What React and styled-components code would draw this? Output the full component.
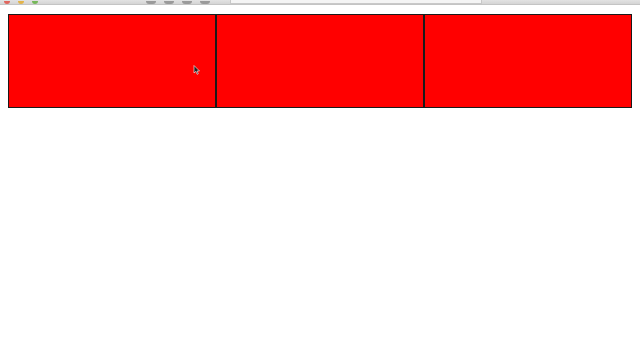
import React from 'react';
import styled, { createGlobalStyle } from 'styled-components';

const GlobalStyle = createGlobalStyle`
    html, body {
        margin: 0;
        padding: 0;
        background: #ffffff;
        font-family: "Liberation Sans", Arial, sans-serif;
    }
`;

const ChromeBar = styled.div`
    height: 4px;
    background: linear-gradient(#e2e2e2, #d4d4d4);
    border-bottom: 1px solid #c4c4c4;
    display: flex;
    align-items: flex-end;
    gap: 8px;
    padding: 0 4px;
`;

const ChromeDot = styled.span`
    width: 6px;
    height: 3px;
    border-radius: 0 0 3px 3px;
    background: ${props => props.color};
`;

const ChromeButton = styled.span`
    width: 10px;
    height: 3px;
    border-radius: 0 0 5px 5px;
    background: #9a9a9a;
    margin-left: ${props => props.gapLeft || 0}px;
`;

const AddressBar = styled.div`
    margin-left: 12px;
    width: 250px;
    height: 3px;
    background: #f4f4f4;
    border: 1px solid #c8c8c8;
    border-top: none;
`;

const Page = styled.div`
    padding: 9px 8px;
`;

const Row = styled.div`
    display: flex;
`;

const Box = styled.div`
    position: relative;
    flex: 1;
    height: 92px;
    background: #ff0000;
    border: 1px solid #1a1a1a;
`;

const Cursor = styled.svg`
    position: absolute;
    left: 184px;
    top: 50px;
`;

export default function App() {
    return (
        <>
            <GlobalStyle />
            <ChromeBar>
                <ChromeDot color="#e0665e" />
                <ChromeDot color="#e3b44a" />
                <ChromeDot color="#76b85a" />
                <ChromeButton gapLeft={100} />
                <ChromeButton />
                <ChromeButton />
                <ChromeButton />
                <AddressBar />
            </ChromeBar>
            <Page>
                <Row>
                    <Box>
                        <Cursor width="8" height="10" viewBox="0 0 8 10">
                            <path d="M1 0.5 L1 8 L2.8 6.4 L4.2 9.3 L5.3 8.8 L4 6 L6.5 6 Z" fill="#222" stroke="#fff" strokeWidth="0.6" />
                        </Cursor>
                    </Box>
                    <Box />
                    <Box />
                </Row>
            </Page>
        </>
    );
}
